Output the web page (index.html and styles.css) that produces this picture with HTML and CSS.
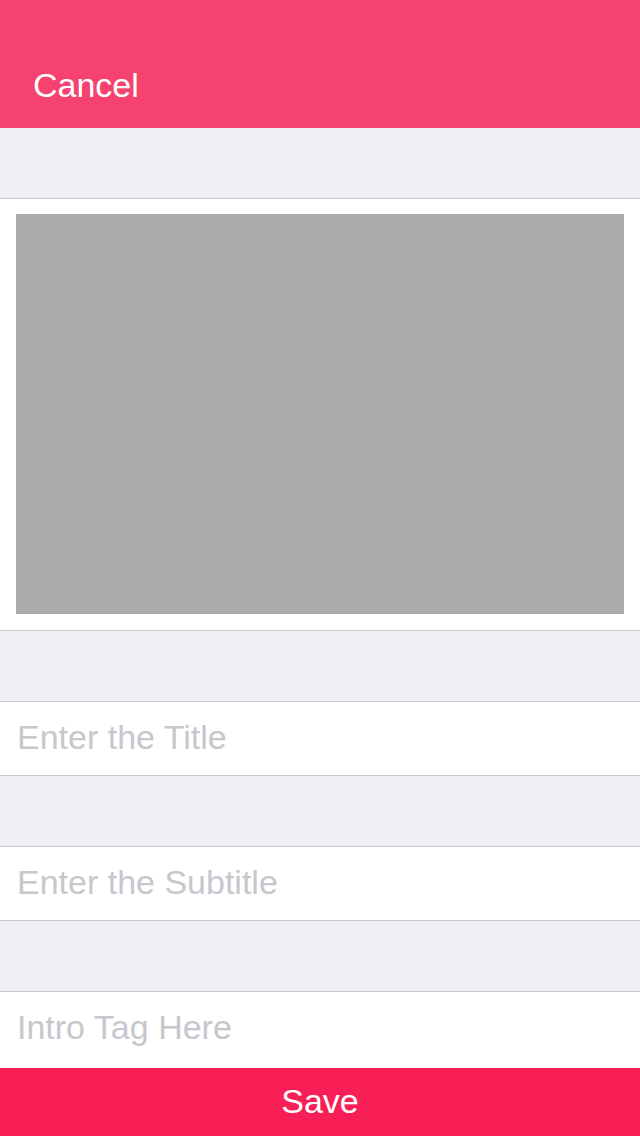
FILE: index.html
```html
<!DOCTYPE html>
<html>
<head>
<meta charset="utf-8">
<link rel="stylesheet" href="styles.css">
</head>
<body>
<div class="screen">
  <header class="navbar"><span class="cancel">Cancel</span></header>
  <div class="spacer"></div>
  <section class="image-cell"><div class="image"></div></section>
  <div class="spacer"></div>
  <div class="field">Enter the Title</div>
  <div class="spacer"></div>
  <div class="field">Enter the Subtitle</div>
  <div class="spacer"></div>
  <div class="field field-last">Intro Tag Here</div>
  <footer class="save">Save</footer>
</div>
</body>
</html>
```
FILE: styles.css
```css
* { box-sizing: border-box; }
html, body { margin: 0; padding: 0; background: #ffffff; }
body { font-family: "Liberation Sans", Arial, sans-serif; }
.screen {
  width: 640px;
  height: 1136px;
  display: flex;
  flex-direction: column;
  overflow: hidden;
}
.navbar {
  height: 128px;
  background: #f5426f;
  padding: 65px 0 0 33px;
  flex: none;
}
.cancel {
  color: #ffffff;
  font-size: 34px;
  line-height: 40px;
  display: block;
}
.spacer {
  height: 71px;
  background: #efeff4;
  border-bottom: 1px solid #c8c7cc;
  flex: none;
}
.image-cell {
  height: 432px;
  padding: 15px 16px 16px 16px;
  border-bottom: 1px solid #c8c7cc;
  background: #ffffff;
  flex: none;
}
.image {
  height: 400px;
  background: #ababab;
}
.field {
  height: 74px;
  padding: 15px 0 0 17px;
  font-size: 34px;
  line-height: 40px;
  color: #c7c7cd;
  border-bottom: 1px solid #c8c7cc;
  background: #ffffff;
  flex: none;
}
.field-last {
  height: 76px;
  border-bottom: none;
}
.save {
  height: 68px;
  background: #f71f55;
  color: #ffffff;
  font-size: 34px;
  line-height: 40px;
  text-align: center;
  padding-top: 13px;
  flex: none;
}
```
